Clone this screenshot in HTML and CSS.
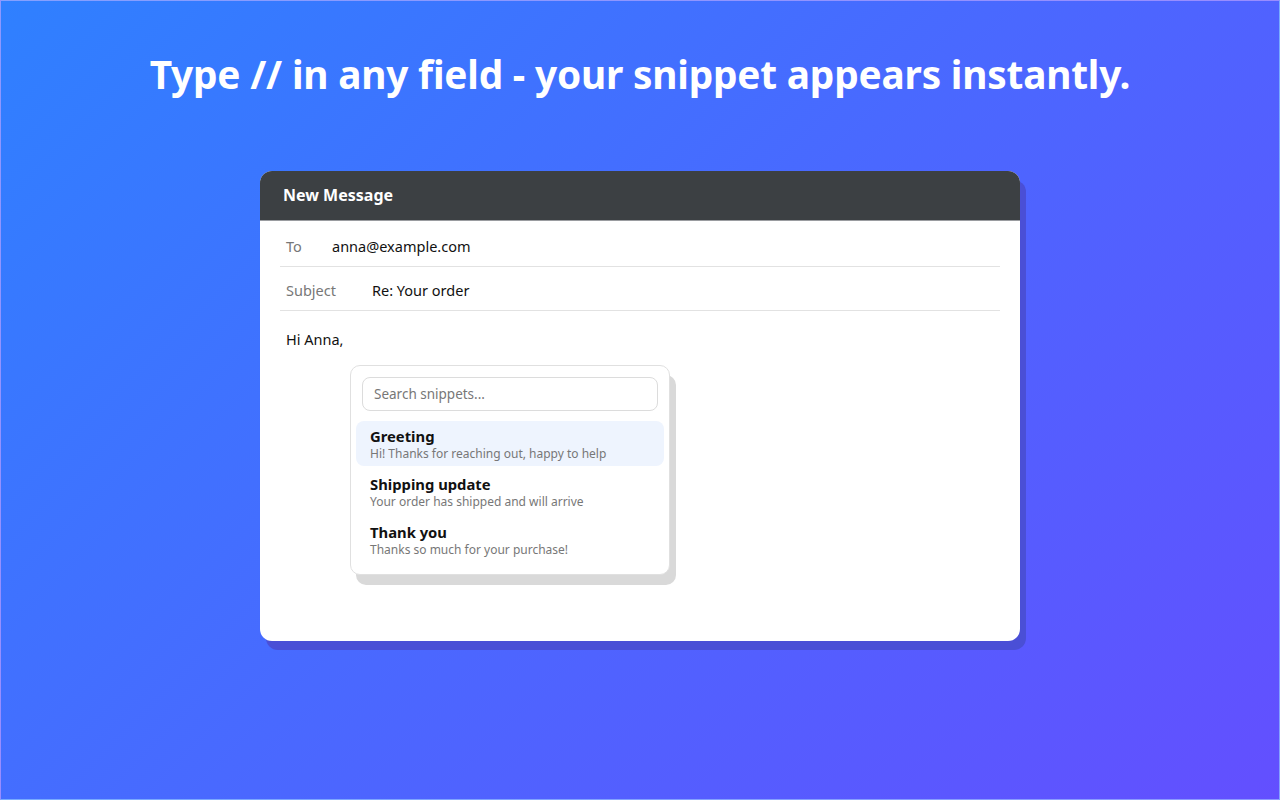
FILE: index.html
```html
<!DOCTYPE html>
<html>
<head>
<meta charset="utf-8">
<link rel="stylesheet" href="styles.css">
</head>
<body>
<div class="page">
  <h1 class="title">Type // in any field - your snippet appears instantly.</h1>
  <div class="card">
    <div class="card-head">New Message</div>
    <div class="card-body">
      <div class="row"><span class="label label-to">To</span><span class="value">anna@example.com</span></div>
      <div class="row"><span class="label label-subject">Subject</span><span class="value">Re: Your order</span></div>
      <div class="message">
        <div class="greeting">Hi Anna,</div>
        <div class="popup">
          <div class="search">Search snippets...</div>
          <div class="item active">
            <div class="item-title">Greeting</div>
            <div class="item-desc">Hi! Thanks for reaching out, happy to help</div>
          </div>
          <div class="item">
            <div class="item-title">Shipping update</div>
            <div class="item-desc">Your order has shipped and will arrive</div>
          </div>
          <div class="item">
            <div class="item-title">Thank you</div>
            <div class="item-desc">Thanks so much for your purchase!</div>
          </div>
        </div>
      </div>
    </div>
  </div>
</div>
</body>
</html>
```
FILE: styles.css
```css
html, body {
  margin: 0;
  padding: 0;
}
body {
  font-family: "Noto Sans", "Open Sans", sans-serif;
}
.page {
  width: 1280px;
  height: 800px;
  box-sizing: border-box;
  border: 1px solid rgba(255,255,255,0.35);
  background: linear-gradient(135deg, #2f80ff 0%, #4a68ff 50%, #634fff 100%);
  display: flex;
  flex-direction: column;
  align-items: center;
}
.title {
  margin: 48px 0 0 0;
  color: #fff;
  font-size: 38.8px;
  font-weight: 700;
  line-height: 50px;
  letter-spacing: -0.2px;
}
.card {
  margin-top: 72px;
  width: 760px;
  height: 470px;
  background: #fff;
  border-radius: 12px;
  overflow: hidden;
  box-shadow: 6px 9px 0 #4a4fd6;
}
.card-head {
  background: #3c4043;
  color: #fff;
  font-weight: 700;
  font-size: 16px;
  height: 50px;
  line-height: 49px;
  padding-left: 23px;
  border-bottom: 1px solid #9a9ca0;
  box-sizing: border-box;
}
.card-body {
  padding: 1px 20px 0 20px;
}
.row {
  display: flex;
  align-items: center;
  padding: 13px 0 9px 0;
  line-height: 22px;
  border-bottom: 1px solid #e2e2e2;
  font-size: 14.5px;
}
.row + .row {
  padding: 12px 0 9px 0;
}
.label {
  color: #777;
  padding-left: 6px;
}
.label-to { width: 46px; }
.label-subject { width: 86px; }
.value {
  color: #111;
}
.message {
  padding: 17px 6px 0 6px;
  font-size: 14.5px;
  color: #111;
}
.greeting {
  line-height: 22px;
}
.popup {
  margin: 15px 0 0 64px;
  width: 320px;
  box-sizing: border-box;
  border: 1px solid #e0e0e0;
  border-radius: 10px;
  background: #fff;
  box-shadow: 6px 10px 0 #d9d9d9;
  padding: 11px 5px 12px 5px;
}
.search {
  margin: 0 6px;
  height: 34px;
  box-sizing: border-box;
  border: 1px solid #dcdcdc;
  border-radius: 8px;
  padding-left: 11px;
  line-height: 32px;
  color: #777;
  font-size: 13.5px;
}
.item {
  margin-top: 10px;
  padding: 5px 14px 4px 14px;
  border-radius: 8px;
}
.item + .item {
  margin-top: 3px;
}
.item.active {
  background: #eef4fe;
}
.item-title {
  font-weight: 700;
  font-size: 14.8px;
  color: #111;
  line-height: 20px;
}
.item-desc {
  font-size: 12px;
  color: #777;
  line-height: 16px;
}
```
